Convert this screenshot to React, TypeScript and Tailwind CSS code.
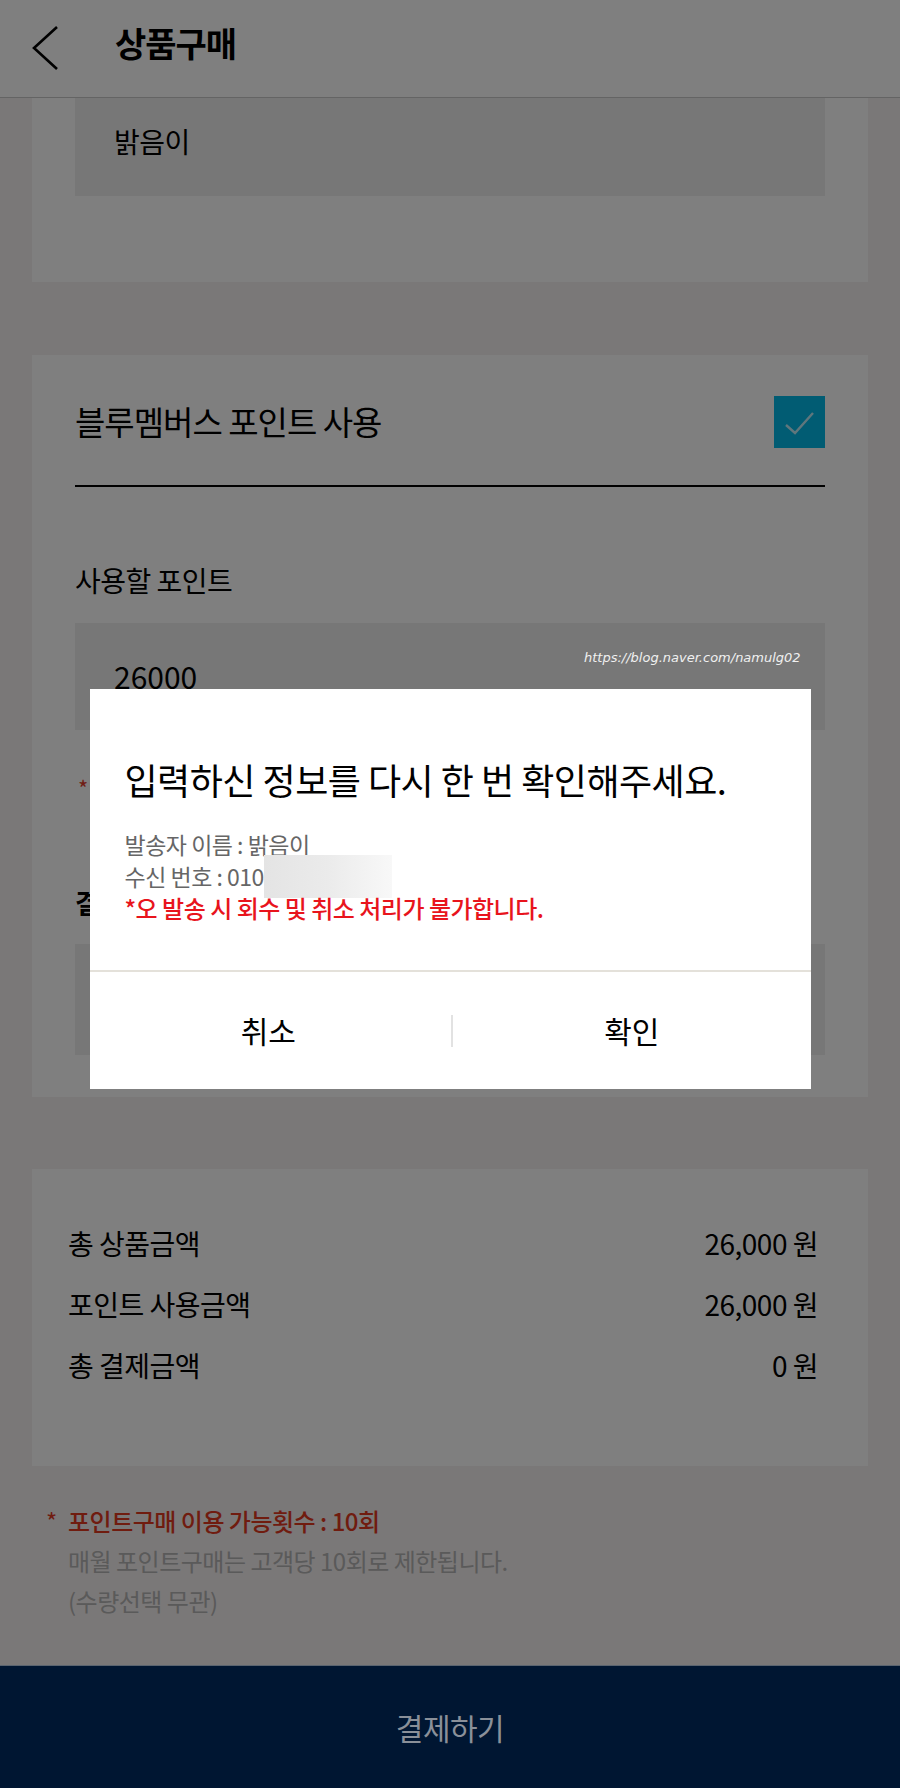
import React from "react";

const FONT = { fontFamily: '"Noto Sans CJK KR", "Noto Sans", sans-serif' };

function BackArrow() {
  return (
    <svg width="30" height="48" viewBox="0 0 30 48" fill="none">
      <polyline points="26,3 3,24 26,45" stroke="#000" strokeWidth="2.6" />
    </svg>
  );
}

function CheckBox() {
  return (
    <div className="flex h-[52px] w-[51px] items-center justify-center bg-[#02b8e6]">
      <svg width="51" height="52" viewBox="0 0 51 52" fill="none">
        <polyline points="12,29 21,37 39,17" stroke="#ffffff" strokeOpacity="0.75" strokeWidth="2.4" />
      </svg>
    </div>
  );
}

function SummaryRow({ label, value }: { label: string; value: string }) {
  return (
    <div className="flex h-[36px] items-center justify-between text-[28px] tracking-[-0.5px] text-black">
      <span>{label}</span>
      <span>{value}</span>
    </div>
  );
}

export default function App() {
  return (
    <div className="relative flex h-[1788px] w-[900px] flex-col overflow-hidden bg-[#f4f0f0]" style={FONT}>
      {/* header */}
      <header className="flex h-[98px] shrink-0 items-center border-b border-[#c8c8c8] bg-white">
        <div className="ml-[31px] mt-[-2px]">
          <BackArrow />
        </div>
        <h1 className="ml-[54px] mt-[-12px] text-[34px] font-bold tracking-[-1px] text-black">상품구매</h1>
      </header>

      {/* sender card (scrolled) */}
      <section className="mx-[32px] h-[184px] shrink-0 bg-white px-[43px]">
        <div className="flex h-[98px] items-center bg-[#eeeeee] pl-[39px] text-[28px] tracking-[-0.5px] text-black">
          <span className="mt-[-12px]">밝음이</span>
        </div>
      </section>

      {/* points card */}
      <section className="mx-[32px] mt-[73px] shrink-0 bg-white px-[43px] pb-[42px] pt-[41px]">
        <div className="flex items-center justify-between border-b-2 border-black pb-[37px]">
          <span className="text-[33px] tracking-[-1px] text-black">블루멤버스 포인트 사용</span>
          <CheckBox />
        </div>
        <div className="mt-[75px] h-[36px] text-[28px] leading-[36px] tracking-[-0.5px] text-black">사용할 포인트</div>
        <div className="mt-[25px] flex h-[107px] items-center bg-[#eeeeee] pl-[39px] text-[30px] text-black">
          26000
        </div>
        <div className="mt-[42px] h-[30px] text-[22px] leading-[30px] text-[#e03a2a]">
          <span className="ml-[3px]">*</span> 사용 가능 포인트 : 26,000 P
        </div>
        <div className="mt-[83px] h-[36px] text-[27px] font-bold leading-[36px] tracking-[-0.5px] text-black">결제 비밀번호</div>
        <div className="mt-[23px] h-[111px] bg-[#eeeeee]" />
      </section>

      {/* summary card */}
      <section className="mx-[32px] mt-[72px] flex shrink-0 flex-col gap-[25px] bg-white pb-[83px] pl-[36px] pr-[50px] pt-[56px]">
        <SummaryRow label="총 상품금액" value="26,000 원" />
        <SummaryRow label="포인트 사용금액" value="26,000 원" />
        <SummaryRow label="총 결제금액" value="0 원" />
      </section>

      {/* notes */}
      <div className="mt-[35px] flex-1 pl-[46px] text-[24px] leading-[40px] tracking-[-0.5px]">
        <div className="flex text-[#e0381f]">
          <span className="w-[22px]">*</span>
          <span className="font-medium">포인트구매 이용 가능횟수 : 10회</span>
        </div>
        <div className="pl-[22px] text-[#b4b4b4]">매월 포인트구매는 고객당 10회로 제한됩니다.</div>
        <div className="pl-[22px] text-[#b4b4b4]">(수량선택 무관)</div>
      </div>

      {/* dim overlay + dialog */}
      <div className="absolute inset-0 z-10 flex items-center justify-center bg-black/50">
        <div className="mb-[10px] flex h-[400px] w-[721px] flex-col bg-white">
          <div className="flex-1 pl-[35px] pt-[68px]">
            <div className="text-[36px] leading-[44px] tracking-[-0.5px] text-black">입력하신 정보를 다시 한 번 확인해주세요.</div>
            <div className="mt-[27px] text-[23px] leading-[32px] tracking-[-0.5px] text-[#666666]">
              <div>발송자 이름 : 밝음이</div>
              <div className="flex h-[32px] items-center">
                <span>수신 번호 : 010</span>
                <span className="h-[43px] w-[128px] shrink-0 bg-gradient-to-r from-[#e4e4e4] via-[#ebebeb] to-[#f8f8f8]" />
              </div>
              <div className="text-[24px] font-medium text-[#e8141c]">*오 발송 시 회수 및 취소 처리가 불가합니다.</div>
            </div>
          </div>
          <div className="flex h-[119px] items-center border-t-2 border-[#e4e1da] text-[30px] text-black">
            <button className="flex-1 pr-[4px] text-center">취소</button>
            <span className="h-[32px] w-[2px] bg-[#e2e2e2]" />
            <button className="flex-1 text-center">확인</button>
          </div>
        </div>
      </div>

      {/* blog watermark on top of the capture */}
      <span
        className="absolute left-[584px] top-[648px] z-20 text-[13px] italic text-[#f0f0f0]"
        style={{ fontFamily: '"DejaVu Sans", sans-serif' }}
      >
        https://blog.naver.com/namulg02
      </span>

      {/* pay bar */}
      <div className="relative z-20 flex h-[123px] shrink-0 items-center justify-center border-t border-[#5a6470] bg-[#001632]">
        <span className="text-[30px] tracking-[-0.5px] text-[#8a9099]">결제하기</span>
      </div>
    </div>
  );
}
